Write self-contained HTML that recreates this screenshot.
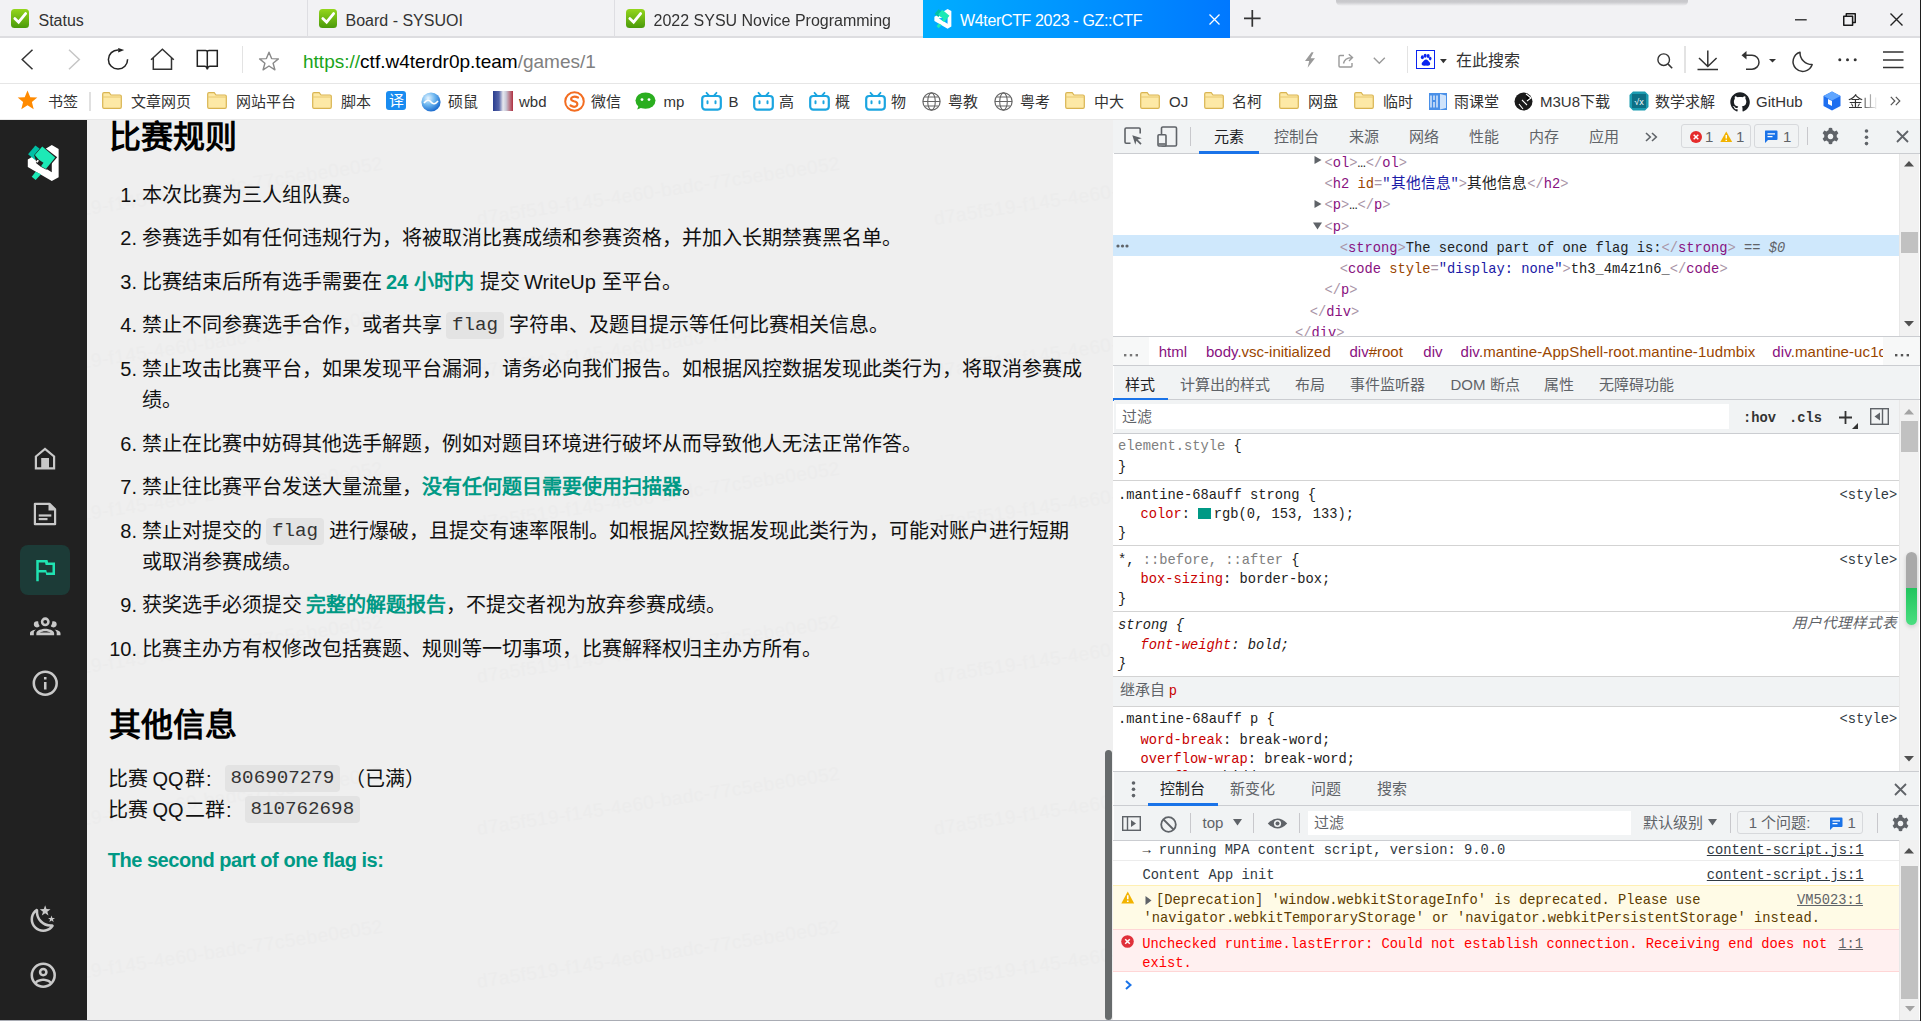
<!DOCTYPE html><html lang="zh-CN"><head><meta charset="utf-8">
<style>
html,body{margin:0;padding:0}
body{width:1921px;height:1021px;overflow:hidden;position:relative;background:#fff;font-family:"Liberation Sans",sans-serif;color:#222}
.a{position:absolute;white-space:nowrap}
svg{position:absolute;overflow:visible}
.mono{font-family:"Liberation Mono",monospace}
/* tab bar */
#tabbar{position:absolute;left:0;top:0;width:1921px;height:36px;background:#f2f2f4;border-bottom:2px solid #dddde0}
.tab{position:absolute;top:1px;height:37px;font-size:16px;line-height:39px;color:#333}
.tsep{position:absolute;top:0;width:1px;height:37px;background:#dedee2}
#addr{position:absolute;left:0;top:38px;width:1921px;height:45px;background:#fff;border-bottom:1px solid #e6e6e6}
#bm{position:absolute;left:0;top:84px;width:1921px;height:35px;background:#fff;border-bottom:1px solid #e8e8e8}
.bmt{position:absolute;top:0;line-height:35px;font-size:15px;color:#333}
/* page */
#side{position:absolute;left:0;top:120px;width:87px;height:901px;background:#212121}
#content{position:absolute;left:87px;top:120px;width:1026px;height:901px;background:#efefef}
.t{position:absolute;white-space:nowrap;font-size:20px;line-height:31px;color:#111}
.g{color:#009985;font-weight:bold}
.code{display:inline-block;background:#e3e3e3;border-radius:4px;font-family:"Liberation Mono",monospace;color:#333}
.wm{font-size:19px;line-height:18px;letter-spacing:0.45px;color:#ececec;transform:rotate(-8.7deg);transform-origin:0 15px}
/* devtools */
#dt{position:absolute;left:1113px;top:120px;width:808px;height:901px;background:#fff;overflow:hidden}
.dm{font-family:"Liberation Mono",monospace;font-size:13.75px}
.ui{font-size:15px;color:#333}
</style></head><body>
<!-- ================= TAB BAR ================= -->
<div id="tabbar">
<div style="position:absolute;left:10.6px;top:9px;width:18.5px;height:18.5px;border-radius:3.5px;background:linear-gradient(#94d61c,#4a9a0a)"></div>
<svg style="left:10.6px;top:9px" width="18.5" height="18.5" viewBox="0 0 18.5 18.5"><path d="M3.8,9.6 L7.6,13.2 L14.6,4.6" fill="none" stroke="#fff" stroke-width="2.8" stroke-linecap="round"></path></svg>
<div class="tab" style="left:38.5px">Status</div>
<div class="tsep" style="left:307px"></div>
<div style="position:absolute;left:318.7px;top:9px;width:18.5px;height:18.5px;border-radius:3.5px;background:linear-gradient(#94d61c,#4a9a0a)"></div>
<svg style="left:318.7px;top:9px" width="18.5" height="18.5" viewBox="0 0 18.5 18.5"><path d="M3.8,9.6 L7.6,13.2 L14.6,4.6" fill="none" stroke="#fff" stroke-width="2.8" stroke-linecap="round"></path></svg>
<div class="tab" style="left:345.5px">Board - SYSUOI</div>
<div class="tsep" style="left:614px"></div>
<div style="position:absolute;left:626px;top:9px;width:18.5px;height:18.5px;border-radius:3.5px;background:linear-gradient(#94d61c,#4a9a0a)"></div>
<svg style="left:626px;top:9px" width="18.5" height="18.5" viewBox="0 0 18.5 18.5"><path d="M3.8,9.6 L7.6,13.2 L14.6,4.6" fill="none" stroke="#fff" stroke-width="2.8" stroke-linecap="round"></path></svg>
<div class="tab" style="left:653.5px;width:256px;overflow:hidden;-webkit-mask-image:linear-gradient(90deg,#000 235px,rgba(0,0,0,.3) 243px,transparent 253px)">2022 SYSU Novice Programming Contest</div>
<div style="position:absolute;left:923px;top:0;width:307px;height:38px;background:linear-gradient(90deg,#00aeff,#0078ff)"></div>
<svg style="left:928.6px;top:5px" width="27.5" height="27.5" viewBox="0 0 1021 1021">
<path fill="#fff" fill-rule="evenodd" d="M200,440 L690,145 L830,225 L830,800 L690,880 L200,590 Z M360,495 L690,700 L690,470 Z"></path>
<path fill="#00bfa5" d="M205,330 L355,155 L505,265 L350,450 Z"></path>
<path fill="#1de9b6" d="M345,345 L495,175 L760,400 L570,635 L470,575 L520,505 L420,440 Z"></path>
<path fill="#1de9b6" d="M280,790 L360,690 L470,740 L360,860 Z"></path>
</svg>
<div class="tab" style="left:960px;color:#fff;letter-spacing:-0.35px">W4terCTF 2023 - GZ::CTF</div>
<svg style="left:1208.5px;top:13.8px" width="11" height="11" viewBox="0 0 11 11"><path d="M0.5,0.5 L10.5,10.5 M10.5,0.5 L0.5,10.5" stroke="#fff" stroke-width="1.3"></path></svg>
<svg style="left:1243.5px;top:10px" width="17" height="17" viewBox="0 0 17 17"><path d="M0,8.4 H16.6 M8.3,0 V16.8" stroke="#333" stroke-width="1.7"></path></svg>
<div style="position:absolute;left:1336px;top:0;width:352px;height:6px;background:linear-gradient(#c8c8cb 0,#cacacd 35%,#f2f2f4 100%);border-radius:0 0 5px 5px"></div>
<svg style="left:1795px;top:19.3px" width="12" height="2" viewBox="0 0 12 2"><path d="M0,0.8 H11.7" stroke="#222" stroke-width="1.3"></path></svg>
<svg style="left:1842.5px;top:12.5px" width="13" height="13" viewBox="0 0 13 13"><path d="M0.75,3.3 H9.6 V12.25 H0.75 Z M3.3,3.3 V0.75 H12.25 V9.6 H9.6" fill="none" stroke="#1a1a1a" stroke-width="1.5" stroke-linejoin="round"></path></svg>
<svg style="left:1890px;top:12.8px" width="13" height="13" viewBox="0 0 13 13"><path d="M0.5,0.5 L12.5,12.5 M12.5,0.5 L0.5,12.5" stroke="#222" stroke-width="1.4"></path></svg>
</div>
<!-- ================= ADDRESS BAR ================= -->
<div id="addr">
<svg style="left:21px;top:11px" width="13" height="21" viewBox="0 0 13 21"><path d="M11.5,0.7 L1.2,10.5 L11.5,20.3" fill="none" stroke="#333" stroke-width="1.5"></path></svg>
<svg style="left:67.5px;top:11px" width="13" height="21" viewBox="0 0 13 21"><path d="M1,0.7 L11.3,10.5 L1,20.3" fill="none" stroke="#c6c6c6" stroke-width="1.5"></path></svg>
<svg style="left:107px;top:9px" width="22" height="24" viewBox="0 0 22 24"><path d="M11.2,2.9 A9.6,9.6 0 1 0 20.6,12.3" fill="none" stroke="#222" stroke-width="1.5"></path><path d="M11.2,0.9 L17.2,3.1 L11.2,5.6 Z" fill="#222"></path></svg>
<svg style="left:150px;top:10px" width="25" height="23" viewBox="0 0 25 23"><path d="M1,11.8 L12.4,1.2 L23.8,11.8 M3.3,9.8 V21.2 H21.5 V9.8" fill="none" stroke="#333" stroke-width="1.5"></path></svg>
<svg style="left:196px;top:11px" width="23" height="22" viewBox="0 0 23 22"><path d="M11.3,20.3 V2.8 Q11.3,1.4 9.6,1.4 H1.3 V17.3 H8.6 Q10.7,17.3 11.3,20.3 Q11.9,17.3 14,17.3 H21.3 V1.4 H13 Q11.3,1.4 11.3,2.8" fill="none" stroke="#222" stroke-width="1.5" stroke-linejoin="miter"></path></svg>
<div style="position:absolute;left:241.5px;top:8px;width:1.5px;height:27px;background:#e3e3e3"></div>
<svg style="left:258px;top:13px" width="22" height="20" viewBox="0 0 22 20"><path d="M11,1.2 L13.6,7.6 L20.4,7.9 L15.1,12.2 L16.9,18.8 L11,15 L5.1,18.8 L6.9,12.2 L1.6,7.9 L8.4,7.6 Z" fill="none" stroke="#8a8a8a" stroke-width="1.4" stroke-linejoin="round"></path></svg>
<div class="a" style="left:303px;top:1px;height:45px;line-height:46px;font-size:19px;color:#000;letter-spacing:0.01px"><span style="color:#1aa41a">https://</span>ctf.w4terdr0p.team<span style="color:#808080">/games/1</span></div>
<svg style="left:1304px;top:14px" width="12" height="16" viewBox="0 0 12 16"><path d="M7.5,0.3 L1,9 H5.2 L3.6,15.7 L11,6.2 H6.6 L9.6,0.3 Z" fill="#9a9a9a"></path></svg>
<svg style="left:1338px;top:15px" width="17" height="15" viewBox="0 0 17 15"><path d="M6,2.5 H2 Q1,2.5 1,3.5 V13 Q1,14 2,14 H13 Q14,14 14,13 V10" fill="none" stroke="#9a9a9a" stroke-width="1.4"></path><path d="M5.5,10.5 Q6.5,5 13.5,4.6 M10.8,1.2 L14.5,4.6 L11,8" fill="none" stroke="#9a9a9a" stroke-width="1.4"></path></svg>
<svg style="left:1373px;top:19px" width="13" height="8" viewBox="0 0 13 8"><path d="M0.8,0.8 L6.3,6.3 L11.8,0.8" fill="none" stroke="#9a9a9a" stroke-width="1.4"></path></svg>
<div style="position:absolute;left:1406.5px;top:8px;width:1.5px;height:27px;background:#e3e3e3"></div>
<div style="position:absolute;left:1416.3px;top:12.2px;width:16.5px;height:16.6px;border:1.5px solid #0a24f0;background:#fff"></div>
<svg style="left:1418px;top:14px" width="16" height="16" viewBox="0 0 16 16"><ellipse cx="4.4" cy="5.3" rx="1.5" ry="2" fill="#0a24f0"></ellipse><ellipse cx="7.2" cy="3.8" rx="1.5" ry="2" fill="#0a24f0"></ellipse><ellipse cx="10.2" cy="4" rx="1.5" ry="2" fill="#0a24f0"></ellipse><ellipse cx="12.2" cy="6.6" rx="1.3" ry="1.8" fill="#0a24f0"></ellipse><path d="M3.8,12.8 Q3.2,10.5 6,8.4 Q8,6.5 10,8.4 Q12.8,10.6 12,12.8 Q11,14.2 8,13.6 Q5,14.3 3.8,12.8 Z" fill="#0a24f0"></path></svg>
<svg style="left:1440px;top:20.5px" width="7" height="5" viewBox="0 0 7 5"><path d="M0,0 H6.8 L3.4,4.2 Z" fill="#333"></path></svg>
<div class="a" style="left: 1456px; top: 0px; line-height: 46px; font-size: 16px; color: rgb(51, 51, 51); width: 64px; text-align-last: justify;">在此搜索</div>
<svg style="left:1657px;top:14.5px" width="16" height="16" viewBox="0 0 16 16"><circle cx="6.7" cy="6.7" r="5.8" fill="none" stroke="#333" stroke-width="1.4"></circle><path d="M10.9,10.9 L15.2,15.2" stroke="#333" stroke-width="1.5"></path></svg>
<div style="position:absolute;left:1684px;top:8px;width:1.5px;height:27px;background:#e3e3e3"></div>
<svg style="left:1697px;top:12px" width="22" height="21" viewBox="0 0 22 21"><path d="M10.8,0.5 V16.5 M2,8 L10.8,16.5 L19.6,8 M0.5,19.5 H21" fill="none" stroke="#333" stroke-width="1.5"></path></svg>
<svg style="left:1741px;top:12px" width="21" height="21" viewBox="0 0 21 21"><path d="M4.5,5.2 H11 A7,7 0 0 1 11,19.2 H5" fill="none" stroke="#333" stroke-width="1.5"></path><path d="M0.5,5.2 L5.5,1 V9.4 Z" fill="#333"></path></svg>
<svg style="left:1769px;top:21px" width="7" height="4" viewBox="0 0 7 4"><path d="M0,0 H7 L3.5,3.6 Z" fill="#333"></path></svg>
<svg style="left:1792.5px;top:12.5px" width="21" height="20" viewBox="0 0 21 20"><path d="M7,1.2 A9.8,9.8 0 1 0 19.2,13.6 A12,12 0 0 1 7,1.2 Z" fill="none" stroke="#333" stroke-width="1.5" stroke-linejoin="round"></path></svg>
<svg style="left:1838px;top:20px" width="20" height="4" viewBox="0 0 20 4"><circle cx="1.8" cy="1.8" r="1.5" fill="#333"></circle><circle cx="9.5" cy="1.8" r="1.5" fill="#333"></circle><circle cx="17.2" cy="1.8" r="1.5" fill="#333"></circle></svg>
<svg style="left:1883px;top:12.5px" width="21" height="18" viewBox="0 0 21 18"><path d="M0,1.1 H20.5 M0,8.9 H20.5 M0,16.4 H20.5" stroke="#333" stroke-width="1.5"></path></svg>
</div>
<!-- ================= BOOKMARKS ================= -->
<div id="bm">
<svg style="left:17px;top:6px" width="21" height="20" viewBox="0 0 21 20"><path d="M10.5,0.5 L13.3,7.2 L20.3,7.6 L14.9,12.1 L16.7,19.2 L10.5,15.3 L4.3,19.2 L6.1,12.1 L0.7,7.6 L7.7,7.2 Z" fill="#ff8a00"></path></svg>
<div class="bmt" style="left: 48px; width: 30px; text-align-last: justify;">书签</div>
<div style="position:absolute;left:89px;top:8px;width:1.5px;height:19px;background:#e0e0e0"></div>
<svg style="left:101.5px;top:8px" width="20" height="17" viewBox="0 0 20 17"><path d="M0.7,2 Q0.7,0.7 2,0.7 H7.2 L9,3 H18 Q19.3,3 19.3,4.3 V15 Q19.3,16.3 18,16.3 H2 Q0.7,16.3 0.7,15 Z" fill="#fde9a6" stroke="#d9b451" stroke-width="1.2"></path><path d="M0.7,5 H19.3" stroke="#e8c870" stroke-width="1"></path></svg>
<div class="bmt" style="left: 131px; width: 60px; text-align-last: justify;">文章网页</div>
<svg style="left:206.5px;top:8px" width="20" height="17" viewBox="0 0 20 17"><path d="M0.7,2 Q0.7,0.7 2,0.7 H7.2 L9,3 H18 Q19.3,3 19.3,4.3 V15 Q19.3,16.3 18,16.3 H2 Q0.7,16.3 0.7,15 Z" fill="#fde9a6" stroke="#d9b451" stroke-width="1.2"></path><path d="M0.7,5 H19.3" stroke="#e8c870" stroke-width="1"></path></svg>
<div class="bmt" style="left: 236px; width: 60px; text-align-last: justify;">网站平台</div>
<svg style="left:312px;top:8px" width="20" height="17" viewBox="0 0 20 17"><path d="M0.7,2 Q0.7,0.7 2,0.7 H7.2 L9,3 H18 Q19.3,3 19.3,4.3 V15 Q19.3,16.3 18,16.3 H2 Q0.7,16.3 0.7,15 Z" fill="#fde9a6" stroke="#d9b451" stroke-width="1.2"></path><path d="M0.7,5 H19.3" stroke="#e8c870" stroke-width="1"></path></svg>
<div class="bmt" style="left: 341px; width: 30px; text-align-last: justify;">脚本</div>
<div style="position:absolute;left:386px;top:7.2px;width:20px;height:19px;border-radius:3px;background:#1a8cf0;color:#fff;font-size:15px;line-height:19px;text-align:center">译</div>
<svg style="left:421px;top:7.5px" width="20" height="20" viewBox="0 0 20 20"><defs><radialGradient id="gs" cx="35%" cy="30%" r="70%"><stop offset="0" stop-color="#e6f4ff"></stop><stop offset="0.5" stop-color="#6fb8f0"></stop><stop offset="1" stop-color="#1f6fd0"></stop></radialGradient></defs><circle cx="10" cy="10" r="9.6" fill="url(#gs)"></circle><path d="M3,11 Q7,6 10,10 Q13,14 17,9" fill="none" stroke="#fff" stroke-width="1.6"></path></svg>
<div class="bmt" style="left: 448px; width: 30px; text-align-last: justify;">硕鼠</div>
<div style="position:absolute;left:493px;top:7px;width:20px;height:20px;background:linear-gradient(90deg,#2a3d8f 0,#5564a8 30%,#e8e8ee 50%,#c8cad8 65%,#b03040 100%)"></div>
<div class="bmt" style="left:519px;">wbd</div>
<svg style="left:564px;top:7px" width="21" height="21" viewBox="0 0 21 21"><circle cx="10.5" cy="10.5" r="9.3" fill="none" stroke="#f36d21" stroke-width="2"></circle><path d="M14,6.5 Q10,4.5 7.5,6.8 Q6,9 10,10.3 Q14.5,11.5 13,14.5 Q10.5,17 6.5,14.5" fill="none" stroke="#f36d21" stroke-width="2.2" stroke-linecap="round"></path></svg>
<div class="bmt" style="left: 591px; width: 30px; text-align-last: justify;">微信</div>
<svg style="left:635px;top:7.5px" width="21" height="18" viewBox="0 0 21 18"><ellipse cx="10.5" cy="8.6" rx="10" ry="8.2" fill="#2aae1f"></ellipse><path d="M3.5,14 L2.2,17.6 L7,15.5 Z" fill="#2aae1f"></path><circle cx="7" cy="7.6" r="1.4" fill="#fff"></circle><circle cx="14" cy="7.6" r="1.4" fill="#fff"></circle></svg>
<div class="bmt" style="left:663.5px;">mp</div>
<svg style="left:701px;top:7.5px" width="21" height="19" viewBox="0 0 21 19"><path d="M5.5,0.8 L8,3.6 M15.5,0.8 L13,3.6" stroke="#1ba5e0" stroke-width="1.8" stroke-linecap="round"></path><rect x="1.2" y="4" width="18.6" height="13.6" rx="3" fill="none" stroke="#1ba5e0" stroke-width="2.2"></rect><path d="M6.5,9.3 V11.2 M14.5,9.3 V11.2" stroke="#1ba5e0" stroke-width="2" stroke-linecap="round"></path></svg>
<div class="bmt" style="left:728.5px;">B</div>
<svg style="left:753px;top:7.5px" width="21" height="19" viewBox="0 0 21 19"><path d="M5.5,0.8 L8,3.6 M15.5,0.8 L13,3.6" stroke="#1ba5e0" stroke-width="1.8" stroke-linecap="round"></path><rect x="1.2" y="4" width="18.6" height="13.6" rx="3" fill="none" stroke="#1ba5e0" stroke-width="2.2"></rect><path d="M6.5,9.3 V11.2 M14.5,9.3 V11.2" stroke="#1ba5e0" stroke-width="2" stroke-linecap="round"></path></svg>
<div class="bmt" style="left: 778.5px; width: 15px; text-align-last: justify;">高</div>
<svg style="left:808.5px;top:7.5px" width="21" height="19" viewBox="0 0 21 19"><path d="M5.5,0.8 L8,3.6 M15.5,0.8 L13,3.6" stroke="#1ba5e0" stroke-width="1.8" stroke-linecap="round"></path><rect x="1.2" y="4" width="18.6" height="13.6" rx="3" fill="none" stroke="#1ba5e0" stroke-width="2.2"></rect><path d="M6.5,9.3 V11.2 M14.5,9.3 V11.2" stroke="#1ba5e0" stroke-width="2" stroke-linecap="round"></path></svg>
<div class="bmt" style="left: 835px; width: 15px; text-align-last: justify;">概</div>
<svg style="left:865px;top:7.5px" width="21" height="19" viewBox="0 0 21 19"><path d="M5.5,0.8 L8,3.6 M15.5,0.8 L13,3.6" stroke="#1ba5e0" stroke-width="1.8" stroke-linecap="round"></path><rect x="1.2" y="4" width="18.6" height="13.6" rx="3" fill="none" stroke="#1ba5e0" stroke-width="2.2"></rect><path d="M6.5,9.3 V11.2 M14.5,9.3 V11.2" stroke="#1ba5e0" stroke-width="2" stroke-linecap="round"></path></svg>
<div class="bmt" style="left: 890.5px; width: 15px; text-align-last: justify;">物</div>
<svg style="left:921.5px;top:8px" width="19" height="19" viewBox="0 0 19 19"><circle cx="9.5" cy="9.5" r="8.6" fill="none" stroke="#666" stroke-width="1.2"></circle><ellipse cx="9.5" cy="9.5" rx="3.8" ry="8.6" fill="none" stroke="#666" stroke-width="1.1"></ellipse><path d="M1,9.5 H18 M2.5,5 H16.5 M2.5,14 H16.5" stroke="#666" stroke-width="1.1"></path></svg>
<div class="bmt" style="left: 947.5px; width: 30px; text-align-last: justify;">粤教</div>
<svg style="left:993.5px;top:8px" width="19" height="19" viewBox="0 0 19 19"><circle cx="9.5" cy="9.5" r="8.6" fill="none" stroke="#666" stroke-width="1.2"></circle><ellipse cx="9.5" cy="9.5" rx="3.8" ry="8.6" fill="none" stroke="#666" stroke-width="1.1"></ellipse><path d="M1,9.5 H18 M2.5,5 H16.5 M2.5,14 H16.5" stroke="#666" stroke-width="1.1"></path></svg>
<div class="bmt" style="left: 1019.5px; width: 30px; text-align-last: justify;">粤考</div>
<svg style="left:1064.5px;top:8px" width="20" height="17" viewBox="0 0 20 17"><path d="M0.7,2 Q0.7,0.7 2,0.7 H7.2 L9,3 H18 Q19.3,3 19.3,4.3 V15 Q19.3,16.3 18,16.3 H2 Q0.7,16.3 0.7,15 Z" fill="#fde9a6" stroke="#d9b451" stroke-width="1.2"></path><path d="M0.7,5 H19.3" stroke="#e8c870" stroke-width="1"></path></svg>
<div class="bmt" style="left: 1094px; width: 30px; text-align-last: justify;">中大</div>
<svg style="left:1139.5px;top:8px" width="20" height="17" viewBox="0 0 20 17"><path d="M0.7,2 Q0.7,0.7 2,0.7 H7.2 L9,3 H18 Q19.3,3 19.3,4.3 V15 Q19.3,16.3 18,16.3 H2 Q0.7,16.3 0.7,15 Z" fill="#fde9a6" stroke="#d9b451" stroke-width="1.2"></path><path d="M0.7,5 H19.3" stroke="#e8c870" stroke-width="1"></path></svg>
<div class="bmt" style="left:1169px;">OJ</div>
<svg style="left:1203.5px;top:8px" width="20" height="17" viewBox="0 0 20 17"><path d="M0.7,2 Q0.7,0.7 2,0.7 H7.2 L9,3 H18 Q19.3,3 19.3,4.3 V15 Q19.3,16.3 18,16.3 H2 Q0.7,16.3 0.7,15 Z" fill="#fde9a6" stroke="#d9b451" stroke-width="1.2"></path><path d="M0.7,5 H19.3" stroke="#e8c870" stroke-width="1"></path></svg>
<div class="bmt" style="left: 1232px; width: 30px; text-align-last: justify;">名柯</div>
<svg style="left:1279px;top:8px" width="20" height="17" viewBox="0 0 20 17"><path d="M0.7,2 Q0.7,0.7 2,0.7 H7.2 L9,3 H18 Q19.3,3 19.3,4.3 V15 Q19.3,16.3 18,16.3 H2 Q0.7,16.3 0.7,15 Z" fill="#fde9a6" stroke="#d9b451" stroke-width="1.2"></path><path d="M0.7,5 H19.3" stroke="#e8c870" stroke-width="1"></path></svg>
<div class="bmt" style="left: 1308px; width: 30px; text-align-last: justify;">网盘</div>
<svg style="left:1354px;top:8px" width="20" height="17" viewBox="0 0 20 17"><path d="M0.7,2 Q0.7,0.7 2,0.7 H7.2 L9,3 H18 Q19.3,3 19.3,4.3 V15 Q19.3,16.3 18,16.3 H2 Q0.7,16.3 0.7,15 Z" fill="#fde9a6" stroke="#d9b451" stroke-width="1.2"></path><path d="M0.7,5 H19.3" stroke="#e8c870" stroke-width="1"></path></svg>
<div class="bmt" style="left: 1383px; width: 30px; text-align-last: justify;">临时</div>
<svg style="left:1428px;top:7.5px" width="20" height="19" viewBox="0 0 20 19"><path d="M1,1 H19 V18 H1 Z" fill="#4a90e8"></path><path d="M3,3.5 V15.5 M6,3.5 V8 M6,10 V15.5 M9,3.5 V15.5" stroke="#fff" stroke-width="1.2"></path><path d="M12,2 L18,3.5 V16 L12,17.5 Z" fill="#cfe3fb"></path></svg>
<div class="bmt" style="left: 1454px; width: 45px; text-align-last: justify;">雨课堂</div>
<svg style="left:1514px;top:7.5px" width="19" height="19" viewBox="0 0 19 19"><circle cx="9.5" cy="9.5" r="9" fill="#1a1a1a"></circle><path d="M12,2 L17,6 L13,9 M5,12 L9,17 M8,8 L13,13" stroke="#fff" stroke-width="1.1"></path></svg>
<div class="bmt" style="left: 1540px; width: 70.02px; text-align-last: justify;">M3U8下载</div>
<svg style="left:1629px;top:7px" width="20" height="20" viewBox="0 0 20 20"><path d="M4,0.5 H16 L19.5,4 V16 L16,19.5 H4 L0.5,16 V4 Z" fill="#1b9bb0"></path><rect x="3" y="3" width="14" height="14" fill="#0d6f85"></rect><text x="10" y="13.5" font-size="9" fill="#fff" text-anchor="middle" font-family="Liberation Sans">√x</text></svg>
<div class="bmt" style="left: 1654.5px; width: 60px; text-align-last: justify;">数学求解</div>
<svg style="left:1730px;top:7.5px" width="20" height="20" viewBox="0 0 20 20"><path fill="#1b1f23" d="M10,0.3C4.6,0.3 0.3,4.7 0.3,10.1c0,4.3 2.8,8 6.6,9.3c0.5,0.1 0.7-0.2 0.7-0.5v-1.7c-2.7,0.6-3.3-1.3-3.3-1.3c-0.4-1.1-1.1-1.4-1.1-1.4c-0.9-0.6 0.1-0.6 0.1-0.6c1,0.1 1.5,1 1.5,1c0.9,1.5 2.3,1.1 2.9,0.8c0.1-0.6 0.3-1.1 0.6-1.3c-2.2-0.2-4.4-1.1-4.4-4.9c0-1.1 0.4-2 1-2.7c-0.1-0.3-0.4-1.3 0.1-2.6c0,0 0.8-0.3 2.7,1c0.8-0.2 1.6-0.3 2.4-0.3c0.8,0 1.7,0.1 2.4,0.3c1.9-1.3 2.7-1 2.7-1c0.5,1.3 0.2,2.3 0.1,2.6c0.6,0.7 1,1.6 1,2.7c0,3.8-2.3,4.6-4.5,4.9c0.4,0.3 0.7,0.9 0.7,1.8v2.7c0,0.3 0.2,0.6 0.7,0.5c3.9-1.3 6.6-5 6.6-9.3C19.7,4.7 15.4,0.3 10,0.3z"></path></svg>
<div class="bmt" style="left:1756px;">GitHub</div>
<svg style="left:1822.5px;top:7px" width="18" height="20" viewBox="0 0 18 20"><path d="M9,0.5 L17.5,5 V15 L9,19.5 L0.5,15 V5 Z" fill="#1e6ff0"></path><path d="M9,0.5 L17.5,5 L9,9.5 L0.5,5 Z" fill="#5fa5ff"></path><path d="M5,8 L9,10 V15 L5,13 Z" fill="#fff"></path></svg>
<div class="bmt" style="left:1847.5px;width:32px;overflow:hidden;-webkit-mask-image:linear-gradient(90deg,#000 12px,transparent 30px)">金山文档</div>
<svg style="left:1890px;top:12px" width="11" height="10" viewBox="0 0 11 10"><path d="M0.8,0.8 L4.8,5 L0.8,9.2 M5.8,0.8 L9.8,5 L5.8,9.2" fill="none" stroke="#555" stroke-width="1.2"></path></svg>
</div>
<!-- ================= SIDEBAR ================= -->
<div id="side">
<svg style="left:18px;top:18px" width="50" height="50" viewBox="0 0 1021 1021">
<path fill="#fff" fill-rule="evenodd" d="M200,440 L690,145 L830,225 L830,800 L690,880 L200,590 Z M360,495 L690,700 L690,470 Z"></path>
<path fill="#00bfa5" d="M205,330 L355,155 L505,265 L350,450 Z"></path>
<path fill="#212121" d="M330,345 L495,160 L800,395 L580,650 L465,585 L380,520 Z"></path>
<path fill="#1de9b6" d="M345,345 L495,175 L760,400 L570,635 L470,575 L520,505 L420,440 Z"></path>
<path fill="#fff" d="M365,485 L400,445 L430,465 L395,505 Z"></path>
<path fill="#1de9b6" d="M280,790 L360,690 L470,740 L360,860 Z"></path>
</svg>
<svg style="left:29px;top:325px" width="30" height="30" viewBox="0 0 30 30">
<path fill="none" stroke="#c9c9c9" stroke-width="2.2" d="M6.9,11.5 L16,4 L25.1,11.5 V23.3 H6.9 Z"></path>
<rect x="12.2" y="13" width="7.8" height="10" fill="#c9c9c9"></rect>
</svg>
<svg style="left:29px;top:380px" width="30" height="30" viewBox="0 0 30 30">
<path fill="none" stroke="#c9c9c9" stroke-width="2.2" stroke-linejoin="round" d="M5.9,3.8 H20.5 L26.1,9.4 V24.2 H5.9 Z"></path>
<path fill="#c9c9c9" d="M19.5,2.7 L27.2,10.4 L19.5,10.4 Z"></path>
<rect x="9.7" y="14.4" width="12.6" height="2.2" fill="#c9c9c9"></rect>
<rect x="9.7" y="18" width="8.8" height="2.2" fill="#c9c9c9"></rect>
</svg>
<div style="position:absolute;left:20px;top:425px;width:50px;height:50px;border-radius:8px;background:#1c3b37"></div>
<svg style="left:30px;top:435px" width="30" height="30" viewBox="0 0 24 24"><path fill="#20e3b2" d="M14.5,6H20V16H13L12.5,14H7V21H5V4H14L14.5,6M7,6V12H13L13.5,14H18V8H12.5L12,6H7Z"></path></svg>
<svg style="left:29.7px;top:490.5px" width="30.5" height="30.5" viewBox="0 0 24 24"><path fill="#c9c9c9" d="M12,5A3.5,3.5 0 0,0 8.5,8.5A3.5,3.5 0 0,0 12,12A3.5,3.5 0 0,0 15.5,8.5A3.5,3.5 0 0,0 12,5M12,7A1.5,1.5 0 0,1 13.5,8.5A1.5,1.5 0 0,1 12,10A1.5,1.5 0 0,1 10.5,8.5A1.5,1.5 0 0,1 12,7M5.5,8A2.5,2.5 0 0,0 3,10.5C3,11.44 3.53,12.25 4.29,12.68C4.65,12.88 5.06,13 5.5,13C5.94,13 6.35,12.88 6.71,12.68C7.08,12.47 7.39,12.17 7.62,11.81C6.89,10.86 6.5,9.7 6.5,8.5C6.5,8.41 6.5,8.31 6.5,8.22C6.2,8.08 5.86,8 5.5,8M18.5,8C18.14,8 17.8,8.08 17.5,8.22C17.5,8.31 17.5,8.41 17.5,8.5C17.5,9.7 17.11,10.86 16.38,11.81C16.5,12 16.63,12.15 16.78,12.3C16.94,12.45 17.1,12.58 17.29,12.68C17.65,12.88 18.06,13 18.5,13C18.94,13 19.35,12.88 19.71,12.68C20.47,12.25 21,11.44 21,10.5A2.5,2.5 0 0,0 18.5,8M12,14C9.66,14 5,15.17 5,17.5V19H19V17.5C19,15.17 14.34,14 12,14M4.71,14.55C2.78,14.78 0,15.76 0,17.5V19H3V17.07C3,16.06 3.69,15.22 4.71,14.55M19.29,14.55C20.31,15.22 21,16.06 21,17.07V19H24V17.5C24,15.76 21.22,14.78 19.29,14.55M12,16C13.53,16 15.24,16.5 16.23,17H7.77C8.76,16.5 10.470,16 12,16Z"></path></svg>
<svg style="left:29.7px;top:547.5px" width="30.5" height="30.5" viewBox="0 0 24 24"><path fill="#c9c9c9" d="M11,9H13V7H11M12,20C7.59,20 4,16.41 4,12C4,7.59 7.59,4 12,4C16.41,4 20,7.59 20,12C20,16.41 16.41,20 12,20M12,2A10,10 0 0,0 2,12A10,10 0 0,0 12,22A10,10 0 0,0 22,12A10,10 0 0,0 12,2M11,17H13V11H11V17Z"></path></svg>
<svg style="left:28px;top:784px" width="30.5" height="30.5" viewBox="0 0 24 24"><path fill="#c9c9c9" d="M17.75,4.09L15.22,6.03L16.13,9.09L13.5,7.28L10.87,9.09L11.780,6.03L9.25,4.09L12.44,4L13.5,1L14.56,4L17.75,4.09M21.25,11L19.61,12.25L20.2,14.23L18.5,13.06L16.8,14.23L17.39,12.25L15.75,11L17.81,10.95L18.5,9L19.19,10.95L21.25,11M18.97,15.95C19.8,15.87 20.69,17.05 20.16,17.8C19.84,18.25 19.5,18.67 19.08,19.07C15.17,23 8.84,23 4.94,19.07C1.03,15.17 1.03,8.83 4.94,4.93C5.34,4.53 5.76,4.17 6.21,3.85C6.96,3.32 8.14,4.21 8.06,5.04C7.79,7.9 8.75,10.87 10.95,13.06C13.14,15.26 16.1,16.22 18.97,15.95M17.33,17.97C14.5,17.81 11.7,16.64 9.53,14.5C7.36,12.31 6.2,9.5 6.04,6.68C3.23,9.820 3.34,14.64 6.35,17.66C9.37,20.67 14.19,20.78 17.33,17.970Z"></path></svg>
<svg style="left:28px;top:840px" width="30.5" height="30.5" viewBox="0 0 24 24"><path fill="#c9c9c9" d="M12,2A10,10 0 0,0 2,12A10,10 0 0,0 12,22A10,10 0 0,0 22,12A10,10 0 0,0 12,2M7.07,18.28C7.5,17.38 10.12,16.5 12,16.5C13.88,16.5 16.5,17.38 16.93,18.28C15.57,19.36 13.86,20 12,20C10.14,20 8.43,19.36 7.07,18.28M18.36,16.83C16.93,15.09 13.46,14.5 12,14.5C10.54,14.5 7.07,15.09 5.64,16.83C4.62,15.5 4,13.82 4,12C4,7.590 7.59,4 12,4C16.41,4 20,7.59 20,12C20,13.82 19.38,15.5 18.36,16.83M12,6C10.06,6 8.5,7.56 8.5,9.5C8.5,11.44 10.06,13 12,13C13.94,13 15.5,11.44 15.5,9.5C15.5,7.56 13.94,6 12,6M12,11A1.5,1.5 0 0,1 10.5,9.5A1.5,1.5 0 0,1 12,8A1.5,1.5 0 0,1 13.5,9.5A1.5,1.5 0 0,1 12,11Z"></path></svg>
</div>
<!-- ================= CONTENT ================= -->
<div id="content" style="overflow:hidden"><div class="a wm" style="left:-66px;top:1005.6px">d7a5f519-f145-4e60-badc-77c5ebe0e052</div><div class="a wm" style="left:391px;top:1005.6px">d7a5f519-f145-4e60-badc-77c5ebe0e052</div><div class="a wm" style="left:848px;top:1005.6px">d7a5f519-f145-4e60-badc-77c5ebe0e052</div><div class="a wm" style="left:-66px;top:853.0px">d7a5f519-f145-4e60-badc-77c5ebe0e052</div><div class="a wm" style="left:391px;top:853.0px">d7a5f519-f145-4e60-badc-77c5ebe0e052</div><div class="a wm" style="left:848px;top:853.0px">d7a5f519-f145-4e60-badc-77c5ebe0e052</div><div class="a wm" style="left:-66px;top:700.4px">d7a5f519-f145-4e60-badc-77c5ebe0e052</div><div class="a wm" style="left:391px;top:700.4px">d7a5f519-f145-4e60-badc-77c5ebe0e052</div><div class="a wm" style="left:848px;top:700.4px">d7a5f519-f145-4e60-badc-77c5ebe0e052</div><div class="a wm" style="left:-66px;top:547.8px">d7a5f519-f145-4e60-badc-77c5ebe0e052</div><div class="a wm" style="left:391px;top:547.8px">d7a5f519-f145-4e60-badc-77c5ebe0e052</div><div class="a wm" style="left:848px;top:547.8px">d7a5f519-f145-4e60-badc-77c5ebe0e052</div><div class="a wm" style="left:-66px;top:395.2px">d7a5f519-f145-4e60-badc-77c5ebe0e052</div><div class="a wm" style="left:391px;top:395.2px">d7a5f519-f145-4e60-badc-77c5ebe0e052</div><div class="a wm" style="left:848px;top:395.2px">d7a5f519-f145-4e60-badc-77c5ebe0e052</div><div class="a wm" style="left:-66px;top:242.6px">d7a5f519-f145-4e60-badc-77c5ebe0e052</div><div class="a wm" style="left:391px;top:242.6px">d7a5f519-f145-4e60-badc-77c5ebe0e052</div><div class="a wm" style="left:848px;top:242.6px">d7a5f519-f145-4e60-badc-77c5ebe0e052</div><div class="a wm" style="left:-66px;top:90.0px">d7a5f519-f145-4e60-badc-77c5ebe0e052</div><div class="a wm" style="left:391px;top:90.0px">d7a5f519-f145-4e60-badc-77c5ebe0e052</div><div class="a wm" style="left:848px;top:90.0px">d7a5f519-f145-4e60-badc-77c5ebe0e052</div></div>
<div class="t" style="left: 109px; top: 117px; font-size: 32px; font-weight: bold; line-height: 40px; color: rgb(0, 0, 0); width: 128px; text-align-last: justify;">比赛规则</div>
<div class="t num" style="left:96px;top:180px;width:41px;text-align:right">1.</div>
<div class="t" style="left: 141.7px; top: 180px; width: 220px; text-align-last: justify;">本次比赛为三人组队赛。</div>
<div class="t num" style="left:96px;top:223px;width:41px;text-align:right">2.</div>
<div class="t" style="left: 141.7px; top: 223px; width: 760px; text-align-last: justify;">参赛选手如有任何违规行为，将被取消比赛成绩和参赛资格，并加入长期禁赛黑名单。</div>
<div class="t num" style="left:96px;top:267px;width:41px;text-align:right">3.</div>
<div class="t" style="left: 141.7px; top: 267px; width: 240px; text-align-last: justify;">比赛结束后所有选手需要在</div>
<div class="t" style="left: 386px; top: 267px; color: rgb(0, 153, 133); font-weight: bold; width: 87.81px; text-align-last: justify;">24 小时内</div>
<div class="t" style="left: 480px; top: 267px; width: 40px; text-align-last: justify;">提交</div>
<div class="t" style="left:524px;top:267px;">WriteUp</div>
<div class="t" style="left: 602px; top: 267px; width: 80px; text-align-last: justify;">至平台。</div>
<div class="t num" style="left:96px;top:310px;width:41px;text-align:right">4.</div>
<div class="t" style="left: 141.7px; top: 310px; width: 300px; text-align-last: justify;">禁止不同参赛选手合作，或者共享</div>
<div class="code" style="position:absolute;left:446.3px;top:312.2px;width:57.4px;height:26.5px;line-height:26.5px;font-size:19.2px;text-align:center">flag</div>
<div class="t" style="left: 509.2px; top: 310px; width: 380px; text-align-last: justify;">字符串、及题目提示等任何比赛相关信息。</div>
<div class="t num" style="left:96px;top:354px;width:41px;text-align:right">5.</div>
<div class="t" style="left: 141.7px; top: 354px; width: 940px; text-align-last: justify;">禁止攻击比赛平台，如果发现平台漏洞，请务必向我们报告。如根据风控数据发现此类行为，将取消参赛成</div>
<div class="t" style="left: 141.7px; top: 385px; width: 40px; text-align-last: justify;">绩。</div>
<div class="t num" style="left:96px;top:429px;width:41px;text-align:right">6.</div>
<div class="t" style="left: 141.7px; top: 429px; width: 780px; text-align-last: justify;">禁止在比赛中妨碍其他选手解题，例如对题目环境进行破坏从而导致他人无法正常作答。</div>
<div class="t num" style="left:96px;top:472px;width:41px;text-align:right">7.</div>
<div class="t" style="left: 141.7px; top: 472px; width: 280px; text-align-last: justify;">禁止往比赛平台发送大量流量，</div>
<div class="t" style="left: 421.7px; top: 472px; color: rgb(0, 153, 133); font-weight: bold; width: 260px; text-align-last: justify;">没有任何题目需要使用扫描器</div>
<div class="t" style="left: 681.7px; top: 472px; width: 20px; text-align-last: justify;">。</div>
<div class="t num" style="left:96px;top:516px;width:41px;text-align:right">8.</div>
<div class="t" style="left: 141.7px; top: 516px; width: 120px; text-align-last: justify;">禁止对提交的</div>
<div class="code" style="position:absolute;left:266.25px;top:518.2px;width:57.5px;height:26.5px;line-height:26.5px;font-size:19.2px;text-align:center">flag</div>
<div class="t" style="left: 328.75px; top: 516px; width: 740px; text-align-last: justify;">进行爆破，且提交有速率限制。如根据风控数据发现此类行为，可能对账户进行短期</div>
<div class="t" style="left: 141.7px; top: 547px; width: 160px; text-align-last: justify;">或取消参赛成绩。</div>
<div class="t num" style="left:96px;top:590px;width:41px;text-align:right">9.</div>
<div class="t" style="left: 141.7px; top: 590px; width: 160px; text-align-last: justify;">获奖选手必须提交</div>
<div class="t" style="left: 306.25px; top: 590px; color: rgb(0, 153, 133); font-weight: bold; width: 140px; text-align-last: justify;">完整的解题报告</div>
<div class="t" style="left: 446.25px; top: 590px; width: 280px; text-align-last: justify;">，不提交者视为放弃参赛成绩。</div>
<div class="t num" style="left:96px;top:634px;width:41px;text-align:right">10.</div>
<div class="t" style="left: 141.7px; top: 634px; width: 680px; text-align-last: justify;">比赛主办方有权修改包括赛题、规则等一切事项，比赛解释权归主办方所有。</div>
<div class="t" style="left: 109px; top: 705px; font-size: 32px; font-weight: bold; line-height: 40px; color: rgb(0, 0, 0); width: 128px; text-align-last: justify;">其他信息</div>
<div class="t" style="left: 107.7px; top: 764px; width: 40px; text-align-last: justify;">比赛</div>
<div class="t" style="left:152.5px;top:764px;">QQ</div>
<div class="t" style="left: 185px; top: 764px; width: 20px; text-align-last: justify;">群</div><div class="t" style="left:206px;top:764px;">:</div>
<div class="code" style="position:absolute;left:225.1px;top:765.1px;width:114.7px;height:26.5px;line-height:26.5px;font-size:19.2px;text-align:center">806907279</div>
<div class="t" style="left: 344.8px; top: 764px; width: 80px; text-align-last: justify;">（已满）</div>
<div class="t" style="left: 107.7px; top: 795px; width: 40px; text-align-last: justify;">比赛</div>
<div class="t" style="left:152.5px;top:795px;">QQ</div>
<div class="t" style="left: 185px; top: 795px; width: 40px; text-align-last: justify;">二群</div><div class="t" style="left:226px;top:795px;">:</div>
<div class="code" style="position:absolute;left:245px;top:796.1px;width:114.7px;height:26.5px;line-height:26.5px;font-size:19.2px;text-align:center">810762698</div>
<div class="t" style="left:107.7px;top:845px;color:#009985;font-weight:bold;letter-spacing:-0.46px">The second part of one flag is:</div>
<div style="position:absolute;left:1105px;top:750px;width:7px;height:270px;border-radius:4px;background:#676b6c"></div>
<!-- ================= DEVTOOLS ================= -->
<div id="dt">
<div style="position:absolute;left:-1.00px;top:0.00px;width:1.00px;height:901.00px;background:#ffffff"></div>
<div style="position:absolute;left:0.00px;top:0.00px;width:808.00px;height:33.00px;background:#f1f3f4"></div>
<div style="position:absolute;left:1.00px;top:33.00px;width:807.00px;height:1.00px;background:#cbcdd1"></div>
<svg style="left:11.00px;top:7.00px" width="19" height="19" viewBox="0 0 19 19"><path d="M6.5,16.2 H2.2 Q1,16.2 1,15 V2.2 Q1,1 2.2,1 H15 Q16.2,1 16.2,2.2 V6.5" fill="none" stroke="#5f6368" stroke-width="1.6"></path><path d="M8.3,8.3 L17.8,11.3 L13.6,12.6 L17.6,16.6 L16.4,17.8 L12.4,13.8 L11.3,17.8 Z" fill="#5f6368"></path></svg>
<svg style="left:43.50px;top:6.00px" width="21" height="21" viewBox="0 0 21 21"><rect x="4.5" y="1" width="15" height="19" rx="1.3" fill="none" stroke="#5f6368" stroke-width="1.6"></rect><rect x="1" y="8.8" width="8" height="11.2" rx="1" fill="#f1f3f4" stroke="#5f6368" stroke-width="1.6"></rect><path d="M1.5,18 H8.5" stroke="#5f6368" stroke-width="1.6"></path></svg>
<div style="position:absolute;left:77.20px;top:6.50px;width:1.00px;height:19.00px;background:#c8c8cc"></div>
<div class="a ui" style="left: 100.5px; top: 6.5px; line-height: 20px; color: rgb(32, 33, 36); width: 30px; text-align-last: justify;">元素</div>
<div class="a ui" style="left: 161px; top: 6.5px; line-height: 20px; color: rgb(95, 99, 104); width: 45px; text-align-last: justify;">控制台</div>
<div class="a ui" style="left: 235.6px; top: 6.5px; line-height: 20px; color: rgb(95, 99, 104); width: 30px; text-align-last: justify;">来源</div>
<div class="a ui" style="left: 295.8px; top: 6.5px; line-height: 20px; color: rgb(95, 99, 104); width: 30px; text-align-last: justify;">网络</div>
<div class="a ui" style="left: 355.6px; top: 6.5px; line-height: 20px; color: rgb(95, 99, 104); width: 30px; text-align-last: justify;">性能</div>
<div class="a ui" style="left: 416.3px; top: 6.5px; line-height: 20px; color: rgb(95, 99, 104); width: 30px; text-align-last: justify;">内存</div>
<div class="a ui" style="left: 475.7px; top: 6.5px; line-height: 20px; color: rgb(95, 99, 104); width: 30px; text-align-last: justify;">应用</div>
<div style="position:absolute;left:86.00px;top:31.00px;width:60.00px;height:3.00px;background:#1a73e8"></div>
<svg style="left:531.50px;top:11.50px" width="13" height="10" viewBox="0 0 13 10"><path d="M1,1 L5.3,5 L1,9 M7,1 L11.3,5 L7,9" fill="none" stroke="#5f6368" stroke-width="1.6"></path></svg>
<div style="position:absolute;left:568.20px;top:4.40px;width:70.00px;height:24.00px;background:#f1f3f4;border:1px solid #d7d9dc;border-radius:3px;box-sizing:border-box"></div>
<svg style="left:576.70px;top:10.60px" width="12" height="12" viewBox="0 0 12 12"><circle cx="6" cy="6" r="6" fill="#e52b2b"></circle><path d="M3.7,3.7 L8.3,8.3 M8.3,3.7 L3.7,8.3" stroke="#fff" stroke-width="1.5"></path></svg>
<div class="a ui" style="left:592.00px;top:6.50px;line-height:20px;color:#5f6368">1</div>
<svg style="left:606.50px;top:10.50px" width="12.5" height="11.5" viewBox="0 0 12.5 11.5"><path d="M6.25,0.5 L12.2,11 H0.3 Z" fill="#f2b300"></path><path d="M6.25,4 V7.5 M6.25,8.7 V10" stroke="#fff" stroke-width="1.4"></path></svg>
<div class="a ui" style="left:623.00px;top:6.50px;line-height:20px;color:#5f6368">1</div>
<div style="position:absolute;left:641.30px;top:4.40px;width:45.00px;height:24.00px;background:#f1f3f4;border:1px solid #d7d9dc;border-radius:3px;box-sizing:border-box"></div>
<svg style="left:650.50px;top:10.30px" width="14" height="13.5" viewBox="0 0 14 13.5"><path d="M1.5,0.5 H12.5 Q13.5,0.5 13.5,1.5 V9 Q13.5,10 12.5,10 H4 L1,13 V1.5 Q1,0.5 1.5,0.5 Z" fill="#1a73e8"></path><path d="M3.5,3.8 H11 M3.5,6.6 H8.5" stroke="#fff" stroke-width="1.3"></path></svg>
<div class="a ui" style="left:670.00px;top:6.50px;line-height:20px;color:#5f6368">1</div>
<div style="position:absolute;left:693.50px;top:7.00px;width:1.50px;height:18.00px;background:#c8c8cc"></div>
<svg style="left:708.00px;top:7.00px" width="19" height="19" viewBox="0 0 19 19"><path fill="#5f6368" d="M9.5,0.8 l1.6,0.2 0.5,2.3 a6.6,6.6 0 0 1 1.9,1.1 l2.2,-0.8 0.9,1.3 0.8,1.4 -1.7,1.6 a6.6,6.6 0 0 1 0,2.2 l1.7,1.6 -0.8,1.4 -0.9,1.3 -2.2,-0.8 a6.6,6.6 0 0 1 -1.9,1.1 l-0.5,2.3 -1.6,0.2 -1.6,-0.2 -0.5,-2.3 a6.6,6.6 0 0 1 -1.9,-1.1 l-2.2,0.8 -0.9,-1.3 -0.8,-1.4 1.7,-1.6 a6.6,6.6 0 0 1 0,-2.2 l-1.7,-1.6 0.8,-1.4 0.9,-1.3 2.2,0.8 a6.6,6.6 0 0 1 1.9,-1.1 l0.5,-2.3 z M9.5,6.7 a2.8,2.8 0 1 0 0.01,0 z"></path></svg>
<svg style="left:750.50px;top:8.50px" width="5" height="17" viewBox="0 0 5 17"><circle cx="2.5" cy="2" r="1.8" fill="#5f6368"></circle><circle cx="2.5" cy="8.3" r="1.8" fill="#5f6368"></circle><circle cx="2.5" cy="14.6" r="1.8" fill="#5f6368"></circle></svg>
<svg style="left:783.00px;top:10.00px" width="13" height="13" viewBox="0 0 13 13"><path d="M1,1 L12,12 M12,1 L1,12" stroke="#5f6368" stroke-width="1.8"></path></svg>
<div style="position:absolute;left:0.00px;top:115.00px;width:786.00px;height:21.00px;background:#cfe8fc"></div>
<svg style="left:201.00px;top:36.00px" width="8" height="8" viewBox="0 0 8 8"><path d="M0.5,0 L7.5,4 L0.5,8 Z" fill="#5f6368"></path></svg>
<div class="a dm" style="left:211.50px;top:33.80px;line-height:20px;"><span style="color:#a894a6">&lt;</span><span style="color:#881280">ol</span><span style="color:#a894a6">&gt;</span>…<span style="color:#a894a6">&lt;/</span><span style="color:#881280">ol</span><span style="color:#a894a6">&gt;</span></div>
<div class="a dm" style="left: 211.5px; top: 54px; line-height: 20px; width: 243.92px; text-align-last: justify;"><span style="color:#a894a6">&lt;</span><span style="color:#881280">h2</span> <span style="color:#994500">id</span><span style="color:#a894a6">=</span><span style="color:#1a1aa6">"<span style="font-size:14.7px">其他信息</span>"</span><span style="color:#a894a6">&gt;</span><span style="color:#222;font-size:14.7px">其他信息</span><span style="color:#a894a6">&lt;/</span><span style="color:#881280">h2</span><span style="color:#a894a6">&gt;</span></div>
<svg style="left:201.00px;top:79.50px" width="8" height="8" viewBox="0 0 8 8"><path d="M0.5,0 L7.5,4 L0.5,8 Z" fill="#5f6368"></path></svg>
<div class="a dm" style="left:211.50px;top:76.00px;line-height:20px;"><span style="color:#a894a6">&lt;</span><span style="color:#881280">p</span><span style="color:#a894a6">&gt;</span>…<span style="color:#a894a6">&lt;/</span><span style="color:#881280">p</span><span style="color:#a894a6">&gt;</span></div>
<svg style="left:200.00px;top:102.00px" width="9" height="8" viewBox="0 0 9 8"><path d="M0,0.5 H9 L4.5,7.5 Z" fill="#5f6368"></path></svg>
<div class="a dm" style="left:211.50px;top:97.80px;line-height:20px;"><span style="color:#a894a6">&lt;</span><span style="color:#881280">p</span><span style="color:#a894a6">&gt;</span></div>
<svg style="left:2.50px;top:123.50px" width="13" height="4" viewBox="0 0 13 4"><circle cx="2" cy="2" r="1.6" fill="#5f6368"></circle><circle cx="6.5" cy="2" r="1.6" fill="#5f6368"></circle><circle cx="11" cy="2" r="1.6" fill="#5f6368"></circle></svg>
<div class="a dm" style="left:226.70px;top:118.60px;line-height:20px;"><span style="color:#a894a6">&lt;</span><span style="color:#881280">strong</span><span style="color:#a894a6">&gt;</span><span style="color:#222">The second part of one flag is:</span><span style="color:#a894a6">&lt;/</span><span style="color:#881280">strong</span><span style="color:#a894a6">&gt;</span> <span style="color:#5f6368;font-style:italic">== $0</span></div>
<div class="a dm" style="left:226.70px;top:140.00px;line-height:20px;"><span style="color:#a894a6">&lt;</span><span style="color:#881280">code</span> <span style="color:#994500">style</span><span style="color:#a894a6">=</span><span style="color:#1a1aa6">"display: none"</span><span style="color:#a894a6">&gt;</span><span style="color:#222">th3_4m4z1n6_</span><span style="color:#a894a6">&lt;/</span><span style="color:#881280">code</span><span style="color:#a894a6">&gt;</span></div>
<div class="a dm" style="left:211.50px;top:161.30px;line-height:20px;"><span style="color:#a894a6">&lt;/</span><span style="color:#881280">p</span><span style="color:#a894a6">&gt;</span></div>
<div class="a dm" style="left:196.70px;top:182.70px;line-height:20px;"><span style="color:#a894a6">&lt;/</span><span style="color:#881280">div</span><span style="color:#a894a6">&gt;</span></div>
<div class="a dm" style="left:182.00px;top:204.00px;line-height:20px;"><span style="color:#a894a6">&lt;/</span><span style="color:#881280">div</span><span style="color:#a894a6">&gt;</span></div>
<div style="position:absolute;left:786.00px;top:34.00px;width:20.00px;height:182.00px;background:#f1f1f1;border-left:1px solid #e8e8e8;box-sizing:border-box"></div>
<svg style="left:791.00px;top:41.00px" width="10" height="6" viewBox="0 0 10 6"><path d="M0,5.5 L5,0 L10,5.5 Z" fill="#505050"></path></svg>
<div style="position:absolute;left:788.00px;top:112.00px;width:16.60px;height:20.50px;background:#c1c1c1"></div>
<svg style="left:791.00px;top:200.50px" width="10" height="6" viewBox="0 0 10 6"><path d="M0,0 L10,0 L5,5.5 Z" fill="#505050"></path></svg>
<div style="position:absolute;left:0.00px;top:216.00px;width:808.00px;height:1.00px;background:#cbcdd1"></div>
<div style="position:absolute;left:0.00px;top:217.00px;width:36.00px;height:28.00px;background:#f7f8f8"></div>
<svg style="left:11.00px;top:233.50px" width="14" height="3" viewBox="0 0 14 3"><rect x="0" y="0" width="2.4" height="2.4" fill="#777"></rect><rect x="5.8" y="0" width="2.4" height="2.4" fill="#777"></rect><rect x="11.6" y="0" width="2.4" height="2.4" fill="#777"></rect></svg>
<div class="a ui" style="left:45.70px;top:221.70px;line-height:20px;"><span style="color:#881280">html</span><span style="color:#994500"></span></div>
<div class="a ui" style="left:93.00px;top:221.70px;line-height:20px;"><span style="color:#881280">body</span><span style="color:#994500">.vsc-initialized</span></div>
<div class="a ui" style="left:236.50px;top:221.70px;line-height:20px;"><span style="color:#881280">div</span><span style="color:#994500">#root</span></div>
<div class="a ui" style="left:310.30px;top:221.70px;line-height:20px;"><span style="color:#881280">div</span><span style="color:#994500"></span></div>
<div class="a ui" style="left:347.5px;top:221.7px;line-height:20px;width:422.5px;overflow:hidden;letter-spacing:0.1px"><span style="color:#881280">div</span><span style="color:#994500">.mantine-AppShell-root.mantine-1udmbix</span><span style="display:inline-block;width:17px"></span><span style="color:#881280">div</span><span style="color:#994500">.mantine-uc1d3qz</span></div>
<div style="position:absolute;left:770.00px;top:217.00px;width:37.00px;height:28.00px;background:#f7f8f8"></div>
<svg style="left:782.00px;top:233.50px" width="14" height="3" viewBox="0 0 14 3"><rect x="0" y="0" width="2.4" height="2.4" fill="#555"></rect><rect x="5.8" y="0" width="2.4" height="2.4" fill="#555"></rect><rect x="11.6" y="0" width="2.4" height="2.4" fill="#555"></rect></svg>
<div style="position:absolute;left:0.00px;top:245.00px;width:808.00px;height:1.00px;background:#cbcdd1"></div>
<div style="position:absolute;left:1.00px;top:246.00px;width:805.00px;height:33.00px;background:#f1f3f4"></div>
<div style="position:absolute;left:0.00px;top:278.50px;width:808.00px;height:1.00px;background:#cbcdd1"></div>
<div class="a ui" style="left: 12px; top: 254.8px; line-height: 20px; color: rgb(32, 33, 36); width: 30px; text-align-last: justify;">样式</div>
<div class="a ui" style="left: 67.4px; top: 254.8px; line-height: 20px; color: rgb(95, 99, 104); width: 90px; text-align-last: justify;">计算出的样式</div>
<div class="a ui" style="left: 181.6px; top: 254.8px; line-height: 20px; color: rgb(95, 99, 104); width: 30px; text-align-last: justify;">布局</div>
<div class="a ui" style="left: 237px; top: 254.8px; line-height: 20px; color: rgb(95, 99, 104); width: 75px; text-align-last: justify;">事件监听器</div>
<div class="a ui" style="left: 337.4px; top: 254.8px; line-height: 20px; color: rgb(95, 99, 104); width: 69.17px; text-align-last: justify;">DOM 断点</div>
<div class="a ui" style="left: 431.2px; top: 254.8px; line-height: 20px; color: rgb(95, 99, 104); width: 30px; text-align-last: justify;">属性</div>
<div class="a ui" style="left: 485.8px; top: 254.8px; line-height: 20px; color: rgb(95, 99, 104); width: 75px; text-align-last: justify;">无障碍功能</div>
<div style="position:absolute;left:0.00px;top:277.50px;width:55.00px;height:3.00px;background:#1a73e8"></div>
<div style="position:absolute;left:1.00px;top:280.00px;width:785.00px;height:33.00px;background:#f1f3f4"></div>
<div style="position:absolute;left:3.00px;top:284.00px;width:612.70px;height:25.00px;background:#fff"></div>
<div class="a ui" style="left: 8.7px; top: 286.8px; line-height: 20px; color: rgb(95, 99, 104); width: 30px; text-align-last: justify;">过滤</div>
<div class="a dm" style="left:630.00px;top:288.80px;line-height:20px;font-weight:bold;color:#333">:hov</div>
<div class="a dm" style="left:676.00px;top:288.80px;line-height:20px;font-weight:bold;color:#333">.cls</div>
<svg style="left:725.50px;top:290.50px" width="13" height="13" viewBox="0 0 13 13"><path d="M0,6.5 H13 M6.5,0 V13" stroke="#333" stroke-width="1.8"></path></svg>
<svg style="left:739.00px;top:302.50px" width="6" height="6" viewBox="0 0 6 6"><path d="M6,0 V6 H0 Z" fill="#333"></path></svg>
<svg style="left:756.50px;top:288.30px" width="19" height="17" viewBox="0 0 19 17"><rect x="0.7" y="0.7" width="17.6" height="15.6" fill="none" stroke="#5f6368" stroke-width="1.4"></rect><path d="M12.5,0.7 V16.3" stroke="#5f6368" stroke-width="1.4"></path><path d="M10,4.5 L4.5,8.5 L10,12.5 Z" fill="#5f6368"></path></svg>
<div style="position:absolute;left:0.00px;top:313.00px;width:786.00px;height:1.00px;background:#cbcdd1"></div>
<div style="position:absolute;left:786.00px;top:280.00px;width:20.00px;height:371.00px;background:#f1f1f1;border-left:1px solid #e8e8e8;box-sizing:border-box"></div>
<svg style="left:791.00px;top:289.00px" width="10" height="6" viewBox="0 0 10 6"><path d="M0,5.5 L5,0 L10,5.5 Z" fill="#a3a3a3"></path></svg>
<div style="position:absolute;left:788.00px;top:301.00px;width:16.60px;height:30.50px;background:#c1c1c1"></div>
<svg style="left:791.00px;top:636.00px" width="10" height="6" viewBox="0 0 10 6"><path d="M0,0 L10,0 L5,5.5 Z" fill="#505050"></path></svg>
<div class="a dm" style="left:5.00px;top:317.40px;line-height:20px;"><span style="color:#808080">element.style</span> {</div>
<div class="a dm" style="left:5.00px;top:338.30px;line-height:20px;">}</div>
<div style="position:absolute;left:0.00px;top:360.00px;width:786.00px;height:1.00px;background:#d3d3d3"></div>
<div class="a dm" style="left:5.00px;top:365.60px;line-height:20px;">.mantine-68auff strong {</div>
<div class="a dm" style="left:726.50px;top:365.80px;line-height:20px;color:#303942">&lt;style&gt;</div>
<div class="a dm" style="left:5.00px;top:385.30px;line-height:20px;"><span style="display:inline-block;width:22.5px"></span><span style="color:#c80000">color</span>: <span style="display:inline-block;width:12.5px;height:11.5px;background:#009985;vertical-align:-1px;margin-right:3px"></span>rgb(0, 153, 133);</div>
<div class="a dm" style="left:5.00px;top:404.00px;line-height:20px;">}</div>
<div style="position:absolute;left:0.00px;top:425.00px;width:786.00px;height:1.00px;background:#d3d3d3"></div>
<div class="a dm" style="left:5.00px;top:430.50px;line-height:20px;">*, <span style="color:#808080">::before, ::after</span> {</div>
<div class="a dm" style="left:726.50px;top:430.50px;line-height:20px;color:#303942">&lt;style&gt;</div>
<div class="a dm" style="left:5.00px;top:450.40px;line-height:20px;"><span style="display:inline-block;width:22.5px"></span><span style="color:#c80000">box-sizing</span>: border-box;</div>
<div class="a dm" style="left:5.00px;top:469.50px;line-height:20px;">}</div>
<div style="position:absolute;left:0.00px;top:491.00px;width:786.00px;height:1.00px;background:#d3d3d3"></div>
<div class="a dm" style="left:5.00px;top:495.70px;line-height:20px;font-style:italic">strong {</div>
<div class="a ui" style="left: 679.4px; top: 493.2px; line-height: 20px; font-style: italic; color: rgb(95, 99, 104); font-size: 14.6px; width: 105px; text-align-last: justify;">用户代理样式表</div>
<div class="a dm" style="left:5.00px;top:516.40px;line-height:20px;font-style:italic"><span style="display:inline-block;width:22.5px"></span><span style="color:#c80000">font-weight</span>: bold;</div>
<div class="a dm" style="left:5.00px;top:534.60px;line-height:20px;font-style:italic">}</div>
<div style="position:absolute;left:0.00px;top:556.00px;width:786.00px;height:1.00px;background:#d3d3d3"></div>
<div style="position:absolute;left:0.00px;top:557.00px;width:786.00px;height:29.00px;background:#f1f3f4"></div>
<div style="position:absolute;left:0.00px;top:586.00px;width:786.00px;height:1.00px;background:#d3d3d3"></div>
<div class="a ui" style="left: 6.6px; top: 560.3px; line-height: 20px; color: rgb(95, 99, 104); width: 57.44px; text-align-last: justify;">继承自 <span class="dm" style="color:#c80000">p</span></div>
<div class="a dm" style="left:5.00px;top:590.10px;line-height:20px;">.mantine-68auff p {</div>
<div class="a dm" style="left:726.50px;top:590.00px;line-height:20px;color:#303942">&lt;style&gt;</div>
<div class="a dm" style="left:5.00px;top:611.40px;line-height:20px;"><span style="display:inline-block;width:22.5px"></span><span style="color:#c80000">word-break</span>: break-word;</div>
<div class="a dm" style="left:5.00px;top:629.60px;line-height:20px;"><span style="display:inline-block;width:22.5px"></span><span style="color:#c80000">overflow-wrap</span>: break-word;</div>
<div class="a dm" style="left:5.00px;top:647.50px;line-height:20px;"><span style="display:inline-block;width:22.5px"></span><span style="color:#c80000">overflow</span>: hidden;</div>
<div style="position:absolute;left:793.00px;top:431.50px;width:11.00px;height:73.00px;border-radius:6px;background:linear-gradient(#a9a9a9 0,#a9a9a9 50%,#22c55e 50%,#4ade80 100%);box-shadow:0 2px 4px rgba(0,0,0,.15)"></div>
<div style="position:absolute;left:0.00px;top:651.00px;width:808.00px;height:250.00px;background:#fff"></div>
<div style="position:absolute;left:0.00px;top:651.00px;width:806.00px;height:1.00px;background:#cbcdd1"></div>
<div style="position:absolute;left:1.00px;top:652.00px;width:805.00px;height:33.00px;background:#f1f3f4"></div>
<div style="position:absolute;left:0.00px;top:685.00px;width:806.00px;height:1.00px;background:#cbcdd1"></div>
<svg style="left:17.50px;top:661.00px" width="5" height="17" viewBox="0 0 5 17"><circle cx="2.5" cy="2" r="1.8" fill="#5f6368"></circle><circle cx="2.5" cy="8.3" r="1.8" fill="#5f6368"></circle><circle cx="2.5" cy="14.6" r="1.8" fill="#5f6368"></circle></svg>
<div class="a ui" style="left: 46.8px; top: 659px; line-height: 20px; color: rgb(32, 33, 36); width: 45px; text-align-last: justify;">控制台</div>
<div style="position:absolute;left:35.00px;top:682.50px;width:69.50px;height:3.00px;background:#1a73e8"></div>
<div class="a ui" style="left: 116.5px; top: 659px; line-height: 20px; color: rgb(95, 99, 104); width: 45px; text-align-last: justify;">新变化</div>
<div class="a ui" style="left: 197.7px; top: 659px; line-height: 20px; color: rgb(95, 99, 104); width: 30px; text-align-last: justify;">问题</div>
<div class="a ui" style="left: 264px; top: 659px; line-height: 20px; color: rgb(95, 99, 104); width: 30px; text-align-last: justify;">搜索</div>
<svg style="left:781.00px;top:663.00px" width="13" height="13" viewBox="0 0 13 13"><path d="M1,1 L12,12 M12,1 L1,12" stroke="#5f6368" stroke-width="1.8"></path></svg>
<div style="position:absolute;left:1.00px;top:686.00px;width:805.00px;height:33.50px;background:#f1f3f4"></div>
<div style="position:absolute;left:0.00px;top:719.50px;width:806.00px;height:1.00px;background:#cbcdd1"></div>
<svg style="left:9.00px;top:696.00px" width="19" height="15" viewBox="0 0 19 15"><rect x="0.7" y="0.7" width="17.6" height="13.6" fill="none" stroke="#5f6368" stroke-width="1.4"></rect><path d="M5.5,0.7 V14.3" stroke="#5f6368" stroke-width="1.4"></path><path d="M9,4 L14,7.5 L9,11 Z" fill="#5f6368"></path></svg>
<svg style="left:46.50px;top:695.50px" width="17" height="17" viewBox="0 0 17 17"><circle cx="8.5" cy="8.5" r="7.3" fill="none" stroke="#5f6368" stroke-width="1.8"></circle><path d="M3.5,3.5 L13.5,13.5" stroke="#5f6368" stroke-width="1.8"></path></svg>
<div style="position:absolute;left:77.30px;top:693.00px;width:1.00px;height:20.00px;background:#c8c8cc"></div>
<div class="a ui" style="left:89.60px;top:693.00px;line-height:20px;color:#5f6368">top</div>
<svg style="left:119.50px;top:698.50px" width="9" height="7" viewBox="0 0 9 7"><path d="M0,0 H9 L4.5,6.5 Z" fill="#5f6368"></path></svg>
<div style="position:absolute;left:139.70px;top:693.00px;width:1.00px;height:20.00px;background:#c8c8cc"></div>
<svg style="left:153.50px;top:697.00px" width="21" height="13" viewBox="0 0 21 13"><path d="M0.8,6.5 Q10.5,-3.5 20.2,6.5 Q10.5,16.5 0.8,6.5 Z" fill="#5f6368"></path><circle cx="10.5" cy="6.5" r="3.6" fill="#f1f3f4"></circle><circle cx="10.5" cy="6.5" r="2" fill="#5f6368"></circle></svg>
<div style="position:absolute;left:186.30px;top:693.00px;width:1.00px;height:20.00px;background:#c8c8cc"></div>
<div style="position:absolute;left:195.00px;top:690.60px;width:323.20px;height:24.40px;background:#fff"></div>
<div class="a ui" style="left: 200.7px; top: 693px; line-height: 20px; color: rgb(95, 99, 104); width: 30px; text-align-last: justify;">过滤</div>
<div class="a ui" style="left: 529.7px; top: 693px; line-height: 20px; color: rgb(95, 99, 104); width: 60px; text-align-last: justify;">默认级别</div>
<svg style="left:594.50px;top:698.50px" width="9" height="7" viewBox="0 0 9 7"><path d="M0,0 H9 L4.5,6.5 Z" fill="#5f6368"></path></svg>
<div style="position:absolute;left:617.00px;top:693.00px;width:1.00px;height:20.00px;background:#c8c8cc"></div>
<div style="position:absolute;left:623.80px;top:690.60px;width:126.40px;height:23.40px;border:1px solid #d7d9dc;border-radius:3px;box-sizing:border-box"></div>
<div class="a ui" style="left: 635.7px; top: 693px; line-height: 20px; color: rgb(95, 99, 104); width: 61.69px; text-align-last: justify;">1 个问题:</div>
<svg style="left:715.60px;top:696.50px" width="14" height="13.5" viewBox="0 0 14 13.5"><path d="M1.5,0.5 H12.5 Q13.5,0.5 13.5,1.5 V9 Q13.5,10 12.5,10 H4 L1,13 V1.5 Q1,0.5 1.5,0.5 Z" fill="#1a73e8"></path><path d="M3.5,3.8 H11 M3.5,6.6 H8.5" stroke="#fff" stroke-width="1.3"></path></svg>
<div class="a ui" style="left:734.50px;top:693.00px;line-height:20px;color:#5f6368">1</div>
<div style="position:absolute;left:763.70px;top:693.00px;width:1.00px;height:20.00px;background:#c8c8cc"></div>
<svg style="left:778.00px;top:694.00px" width="19" height="19" viewBox="0 0 19 19"><path fill="#5f6368" d="M9.5,0.8 l1.6,0.2 0.5,2.3 a6.6,6.6 0 0 1 1.9,1.1 l2.2,-0.8 0.9,1.3 0.8,1.4 -1.7,1.6 a6.6,6.6 0 0 1 0,2.2 l1.7,1.6 -0.8,1.4 -0.9,1.3 -2.2,-0.8 a6.6,6.6 0 0 1 -1.9,1.1 l-0.5,2.3 -1.6,0.2 -1.6,-0.2 -0.5,-2.3 a6.6,6.6 0 0 1 -1.9,-1.1 l-2.2,0.8 -0.9,-1.3 -0.8,-1.4 1.7,-1.6 a6.6,6.6 0 0 1 0,-2.2 l-1.7,-1.6 0.8,-1.4 0.9,-1.3 2.2,0.8 a6.6,6.6 0 0 1 1.9,-1.1 l0.5,-2.3 z M9.5,6.7 a2.8,2.8 0 1 0 0.01,0 z"></path></svg>
<div class="a dm" style="left:29.50px;top:720.50px;line-height:20px;color:#333">→</div>
<div class="a dm" style="left:45.80px;top:720.50px;line-height:20px;color:#303942">running MPA content script, version: 9.0.0</div>
<div class="a dm" style="left:593.80px;top:720.50px;line-height:20px;color:#303942;text-decoration:underline">content-script.js:1</div>
<div style="position:absolute;left:0.00px;top:740.00px;width:786.00px;height:1.00px;background:#ececec"></div>
<div class="a dm" style="left:29.50px;top:746.20px;line-height:20px;color:#303942">Content App init</div>
<div class="a dm" style="left:593.80px;top:746.20px;line-height:20px;color:#303942;text-decoration:underline">content-script.js:1</div>
<div style="position:absolute;left:0.00px;top:765.00px;width:786.00px;height:44.00px;background:#fffbe6;border-top:1px solid #fff0b3;box-sizing:border-box"></div>
<svg style="left:7.80px;top:771.00px" width="13.5" height="13" viewBox="0 0 13.5 13"><path d="M6.75,0.5 L13.2,12.5 H0.3 Z" fill="#f2b300"></path><path d="M6.75,4.3 V8.3 M6.75,9.6 V11" stroke="#fff" stroke-width="1.6"></path></svg>
<svg style="left:32.00px;top:775.50px" width="7" height="9" viewBox="0 0 7 9"><path d="M0.5,0 L6.5,4.5 L0.5,9 Z" fill="#5f6368"></path></svg>
<div class="a dm" style="left:43.00px;top:771.30px;line-height:20px;color:#5c3c00">[Deprecation] 'window.webkitStorageInfo' is deprecated. Please use</div>
<div class="a dm" style="left:684.00px;top:771.30px;line-height:20px;color:#5f6368;text-decoration:underline">VM5023:1</div>
<div class="a dm" style="left:30.50px;top:789.40px;line-height:20px;color:#5c3c00">'navigator.webkitTemporaryStorage' or 'navigator.webkitPersistentStorage' instead.</div>
<div style="position:absolute;left:0.00px;top:809.00px;width:786.00px;height:43.00px;background:#fff0f0;border-top:1px solid #ffd6d6;border-bottom:1px solid #ffd6d6;box-sizing:border-box"></div>
<svg style="left:8.00px;top:815.20px" width="13" height="13" viewBox="0 0 13 13"><circle cx="6.5" cy="6.5" r="6.3" fill="#e0303a"></circle><path d="M4.2,4.2 L8.8,8.8 M8.8,4.2 L4.2,8.8" stroke="#fff" stroke-width="1.5"></path></svg>
<div class="a dm" style="left:29.30px;top:815.00px;line-height:20px;color:#ff0000">Unchecked runtime.lastError: Could not establish connection. Receiving end does not</div>
<div class="a dm" style="left:725.30px;top:815.00px;line-height:20px;color:#5f6368;text-decoration:underline">1:1</div>
<div class="a dm" style="left:29.30px;top:833.90px;line-height:20px;color:#ff0000">exist.</div>
<svg style="left:11.50px;top:859.50px" width="7" height="10" viewBox="0 0 7 10"><path d="M1,1 L5.5,5 L1,9" fill="none" stroke="#1a73e8" stroke-width="2"></path></svg>
<div style="position:absolute;left:786.00px;top:720.00px;width:20.00px;height:181.00px;background:#f1f1f1;border-left:1px solid #e8e8e8;box-sizing:border-box"></div>
<svg style="left:791.00px;top:728.00px" width="10" height="6" viewBox="0 0 10 6"><path d="M0,5.5 L5,0 L10,5.5 Z" fill="#505050"></path></svg>
<div style="position:absolute;left:788.00px;top:746.00px;width:17.00px;height:133.00px;background:#c1c1c1"></div>
<svg style="left:791.50px;top:886.00px" width="10" height="6" viewBox="0 0 10 6"><path d="M0,0 L10,0 L5,5.5 Z" fill="#a3a3a3"></path></svg>
</div>
<!-- END DT -->
<div style="position:absolute;left:1920px;top:0;width:1px;height:1021px;background:#1e1e1e"></div>
<div style="position:absolute;left:0;top:1020px;width:1920px;height:1px;background:#a9acb4"></div>

</body></html>
